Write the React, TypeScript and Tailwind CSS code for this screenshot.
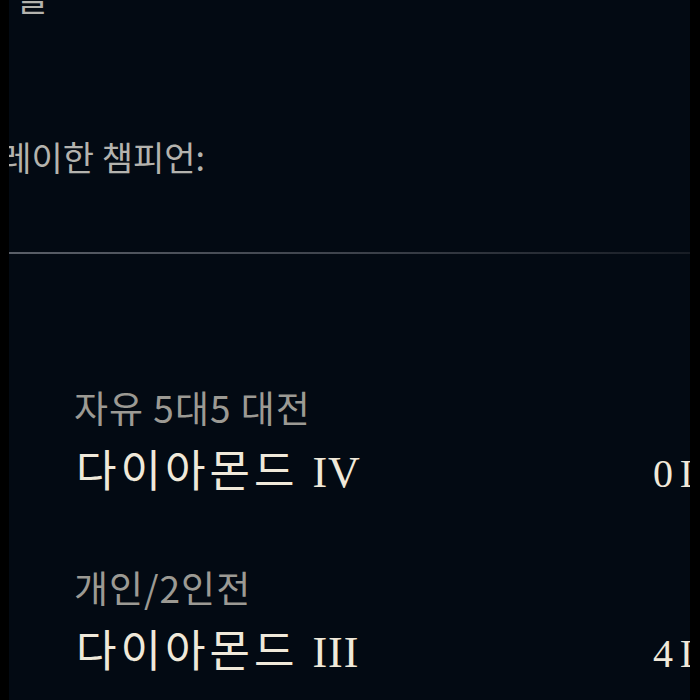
import React from "react";

const kr = { fontFamily: '"Noto Sans CJK KR", "Noto Sans", sans-serif' };
const serif = { fontFamily: '"Liberation Serif", "Noto Sans CJK KR", serif' };

function Rank({ label, tier, roman, lp, gap }: { label: string; tier: string; roman: string; lp: string; gap: string }) {
  return (
    <div className={`flex flex-col pl-[63px] ${gap}`}>
      <div className="ml-[2px] whitespace-nowrap text-[37px] leading-[44px] tracking-[1px] text-[#9c9a94]" style={kr}>
        {label}
      </div>
      <div className="mt-[14px] flex items-baseline">
        <span className="ml-[4px] whitespace-nowrap text-[44px] leading-[50px] tracking-[4px] text-[#f0e9da]" style={kr}>
          {tier}
        </span>
        <span className="ml-[14px] whitespace-nowrap text-[44px] leading-[50px] tracking-[1px] text-[#f0e9da]" style={serif}>
          {roman}
        </span>
        <span className="ml-auto w-[37px] shrink-0 whitespace-nowrap text-[40px] leading-[50px] tracking-[7px] text-[#f0e9da]" style={serif}>
          {lp}
        </span>
      </div>
    </div>
  );
}

export default function App() {
  return (
    <div className="flex h-[700px] w-[700px] overflow-hidden bg-black">
      <div className="w-[9px] shrink-0 bg-black" />
      <div className="flex w-[681px] shrink-0 flex-col overflow-hidden bg-[#030a13]">
        <div className="mt-[-23px] whitespace-nowrap pl-[8px] text-[34px] leading-[40px] text-[#b4b3ae]" style={kr}>
          블
        </div>
        <div className="mt-[120px] ml-[-40px] whitespace-nowrap text-[34px] leading-[40px] text-[#b4b3ae]" style={kr}>
          플레이한 챔피언:
        </div>
        <div className="mt-[75px] h-[2px] w-full shrink-0 bg-gradient-to-r from-[#5a5f68] via-[#3e434c] to-[#181d25]" />
        <Rank label="자유 5대5 대전" tier="다이아몬드" roman="IV" lp="0LP" gap="mt-[131px]" />
        <Rank label="개인/2인전" tier="다이아몬드" roman="III" lp="4LP" gap="mt-[66px]" />
      </div>
      <div className="flex-1 bg-black" />
    </div>
  );
}
